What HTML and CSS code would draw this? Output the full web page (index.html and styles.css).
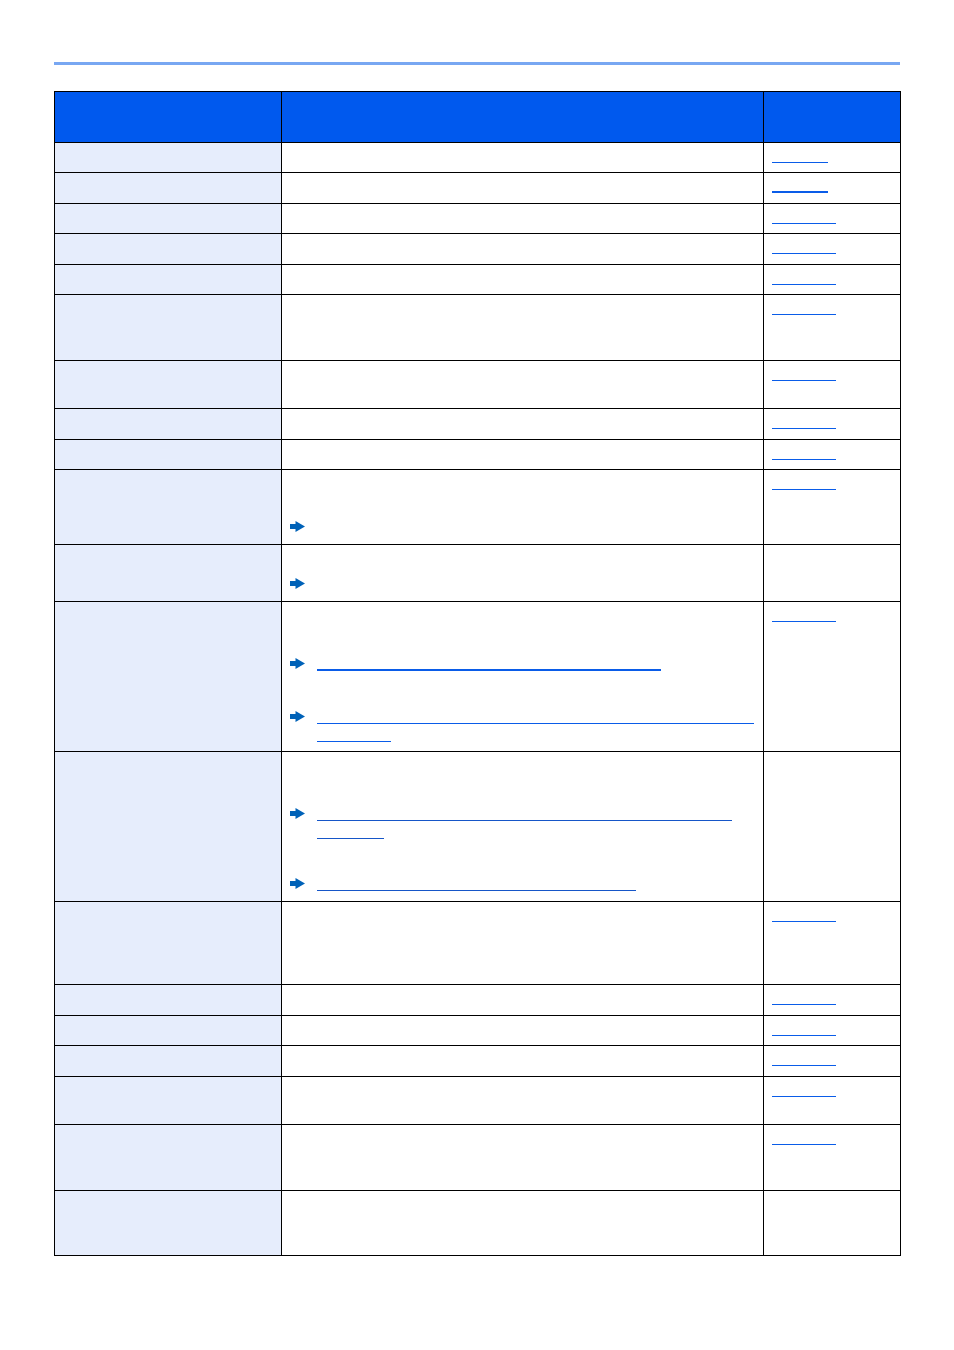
FILE: index.html
```html
<!DOCTYPE html>
<html lang="en">
<head>
<meta charset="utf-8">
<title>Table</title>
<link rel="stylesheet" href="styles.css">
</head>
<body>
<div class="rule"></div>
<table class="tbl">
  <colgroup><col class="c1"><col class="c2"><col class="c3"></colgroup>
  <tr class="head h51"><th></th><th></th><th></th></tr>
  <tr class="h30"><td class="k"></td><td></td><td class="p"><span class="lnk w56"></span></td></tr>
  <tr class="h31"><td class="k"></td><td></td><td class="p"><span class="lnk w56 thick"></span></td></tr>
  <tr class="h30"><td class="k"></td><td></td><td class="p"><span class="lnk w64"></span></td></tr>
  <tr class="h31"><td class="k"></td><td></td><td class="p"><span class="lnk w64"></span></td></tr>
  <tr class="h30"><td class="k"></td><td></td><td class="p"><span class="lnk w64"></span></td></tr>
  <tr class="h66"><td class="k"></td><td></td><td class="p"><span class="lnk w64"></span></td></tr>
  <tr class="h48"><td class="k"></td><td></td><td class="p"><span class="lnk w64"></span></td></tr>
  <tr class="h31"><td class="k"></td><td></td><td class="p"><span class="lnk w64"></span></td></tr>
  <tr class="h30"><td class="k"></td><td></td><td class="p"><span class="lnk w64"></span></td></tr>
  <tr class="h75"><td class="k"></td>
    <td class="p">
      <div class="ref m44"><svg class="arr" viewBox="0 0 15 11" width="15" height="11"><path d="M0 3H5.5V0L15 5.5L5.5 11V8H0Z"/></svg></div>
    </td>
    <td class="p"><span class="lnk w64"></span></td></tr>
  <tr class="h57"><td class="k"></td>
    <td class="p">
      <div class="ref m26"><svg class="arr" viewBox="0 0 15 11" width="15" height="11"><path d="M0 3H5.5V0L15 5.5L5.5 11V8H0Z"/></svg></div>
    </td>
    <td></td></tr>
  <tr class="h150"><td class="k"></td>
    <td class="p">
      <div class="ref m49"><svg class="arr" viewBox="0 0 15 11" width="15" height="11"><path d="M0 3H5.5V0L15 5.5L5.5 11V8H0Z"/></svg><div class="lines"><span class="lnk w344 thick"></span></div></div>
      <div class="ref m37"><svg class="arr" viewBox="0 0 15 11" width="15" height="11"><path d="M0 3H5.5V0L15 5.5L5.5 11V8H0Z"/></svg><div class="lines"><span class="lnk w437"></span><span class="lnk w74"></span></div></div>
    </td>
    <td class="p"><span class="lnk w64"></span></td></tr>
  <tr class="h150"><td class="k"></td>
    <td class="p">
      <div class="ref m49"><svg class="arr" viewBox="0 0 15 11" width="15" height="11"><path d="M0 3H5.5V0L15 5.5L5.5 11V8H0Z"/></svg><div class="lines"><span class="lnk w415 dark"></span><span class="lnk w67 dark"></span></div></div>
      <div class="ref m36"><svg class="arr" viewBox="0 0 15 11" width="15" height="11"><path d="M0 3H5.5V0L15 5.5L5.5 11V8H0Z"/></svg><div class="lines"><span class="lnk w319 dark"></span></div></div>
    </td>
    <td></td></tr>
  <tr class="h83"><td class="k"></td><td></td><td class="p"><span class="lnk w64"></span></td></tr>
  <tr class="h31"><td class="k"></td><td></td><td class="p"><span class="lnk w64"></span></td></tr>
  <tr class="h30"><td class="k"></td><td></td><td class="p"><span class="lnk w64"></span></td></tr>
  <tr class="h31"><td class="k"></td><td></td><td class="p"><span class="lnk w64"></span></td></tr>
  <tr class="h48"><td class="k"></td><td></td><td class="p"><span class="lnk w64"></span></td></tr>
  <tr class="h66"><td class="k"></td><td></td><td class="p"><span class="lnk w64"></span></td></tr>
  <tr class="h65"><td class="k"></td><td></td><td></td></tr>
</table>
</body>
</html>
```

FILE: styles.css
```css
html, body {
  margin: 0;
  padding: 0;
  background: #ffffff;
  font-family: "Liberation Sans", Arial, sans-serif;
  font-size: 13px;
}

.rule {
  margin: 62px 0 0 54px;
  width: 846px;
  height: 3px;
  background: #78a7f2;
}

.tbl {
  margin: 26px 0 0 54px;
  width: 846px;
  border-collapse: collapse;
  table-layout: fixed;
}

.c1 { width: 227px; }
.c2 { width: 482px; }
.c3 { width: 137px; }

.tbl th,
.tbl td {
  border: 1px solid #000000;
  padding: 0;
  vertical-align: top;
}

.head th {
  background: #0059ee;
}

.tbl td.k {
  background: #e6edfc;
}

.tbl td.p {
  padding: 4px 8px 0 8px;
}

.h30 { height: 30px; }
.h31 { height: 31px; }
.h48 { height: 48px; }
.h51 { height: 51px; }
.h57 { height: 57px; }
.h65 { height: 65px; }
.h66 { height: 66px; }
.h75 { height: 75px; }
.h83 { height: 83px; }
.h150 { height: 150px; }

.lnk {
  display: block;
  height: 16px;
  border-bottom: 1px solid #0a5ce8;
  box-sizing: border-box;
}
.lnk + .lnk { height: 18px; }
.lnk.thick { border-bottom-width: 2px; }
.lnk.dark { border-bottom-color: #1656c8; }

.w56 { width: 56px; }
.w64 { width: 64px; }
.w67 { width: 67px; }
.w74 { width: 74px; }
.w319 { width: 319px; }
.w344 { width: 344px; }
.w415 { width: 415px; }
.w437 { width: 437px; }

.ref {
  display: flex;
  align-items: flex-start;
  gap: 12px;
}
.m26 { margin-top: 26px; }
.m36 { margin-top: 36px; }
.m37 { margin-top: 37px; }
.m44 { margin-top: 44px; }
.m49 { margin-top: 49px; }

.arr {
  display: block;
  margin-top: 3px;
  flex: none;
  fill: #0062b8;
}

.lines {
  display: flex;
  flex-direction: column;
}
```
